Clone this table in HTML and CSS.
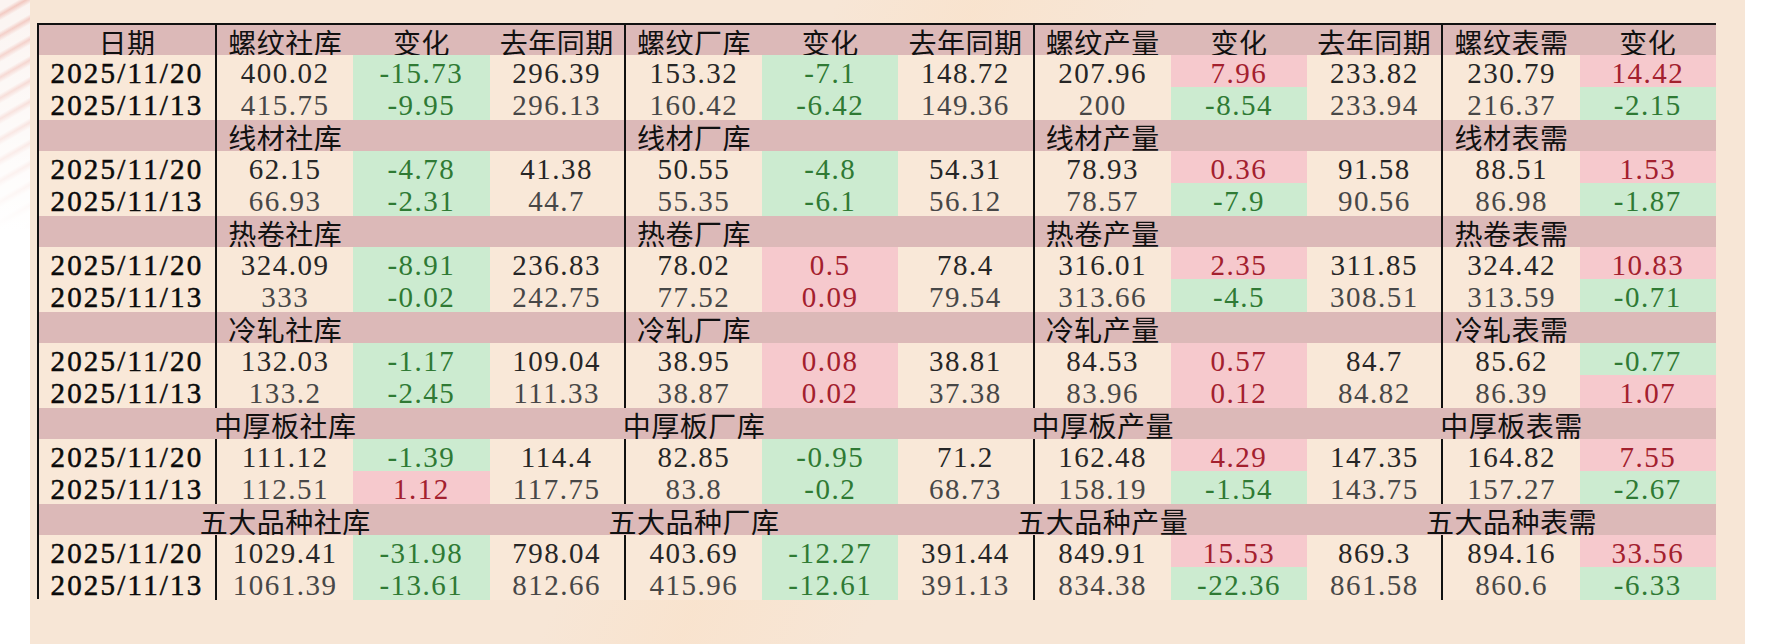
FILE: index.html
```html
<!DOCTYPE html>
<html lang="zh-CN">
<head>
<meta charset="utf-8">
<title>钢材库存表</title>
<link rel="stylesheet" href="styles.css">
</head>
<body>
<div class="page">
  <div class="strip"></div>
  <div class="panel">
    <div class="sheet">
      <div class="row head">
        <div class="cell b">日期</div><div class="cell">螺纹社库</div><div class="cell">变化</div><div class="cell b">去年同期</div>
        <div class="cell">螺纹厂库</div><div class="cell">变化</div><div class="cell b">去年同期</div>
        <div class="cell">螺纹产量</div><div class="cell">变化</div><div class="cell b">去年同期</div>
        <div class="cell">螺纹表需</div><div class="cell">变化</div>
      </div>
      <div class="row data">
        <div class="cell b date">2025/11/20</div><div class="cell">400.02</div><div class="cell g">-15.73</div><div class="cell b">296.39</div>
        <div class="cell">153.32</div><div class="cell g">-7.1</div><div class="cell b">148.72</div>
        <div class="cell">207.96</div><div class="cell r">7.96</div><div class="cell b">233.82</div>
        <div class="cell">230.79</div><div class="cell r">14.42</div>
      </div>
      <div class="row data prev">
        <div class="cell b date">2025/11/13</div><div class="cell">415.75</div><div class="cell g">-9.95</div><div class="cell b">296.13</div>
        <div class="cell">160.42</div><div class="cell g">-6.42</div><div class="cell b">149.36</div>
        <div class="cell">200</div><div class="cell g">-8.54</div><div class="cell b">233.94</div>
        <div class="cell">216.37</div><div class="cell g">-2.15</div>
      </div>

      <div class="row group">
        <div class="cell b"></div><div class="cell">线材社库</div><div class="cell"></div><div class="cell b"></div>
        <div class="cell">线材厂库</div><div class="cell"></div><div class="cell b"></div>
        <div class="cell">线材产量</div><div class="cell"></div><div class="cell b"></div>
        <div class="cell">线材表需</div><div class="cell"></div>
      </div>
      <div class="row data">
        <div class="cell b date">2025/11/20</div><div class="cell">62.15</div><div class="cell g">-4.78</div><div class="cell b">41.38</div>
        <div class="cell">50.55</div><div class="cell g">-4.8</div><div class="cell b">54.31</div>
        <div class="cell">78.93</div><div class="cell r">0.36</div><div class="cell b">91.58</div>
        <div class="cell">88.51</div><div class="cell r">1.53</div>
      </div>
      <div class="row data prev">
        <div class="cell b date">2025/11/13</div><div class="cell">66.93</div><div class="cell g">-2.31</div><div class="cell b">44.7</div>
        <div class="cell">55.35</div><div class="cell g">-6.1</div><div class="cell b">56.12</div>
        <div class="cell">78.57</div><div class="cell g">-7.9</div><div class="cell b">90.56</div>
        <div class="cell">86.98</div><div class="cell g">-1.87</div>
      </div>

      <div class="row group">
        <div class="cell b"></div><div class="cell">热卷社库</div><div class="cell"></div><div class="cell b"></div>
        <div class="cell">热卷厂库</div><div class="cell"></div><div class="cell b"></div>
        <div class="cell">热卷产量</div><div class="cell"></div><div class="cell b"></div>
        <div class="cell">热卷表需</div><div class="cell"></div>
      </div>
      <div class="row data">
        <div class="cell b date">2025/11/20</div><div class="cell">324.09</div><div class="cell g">-8.91</div><div class="cell b">236.83</div>
        <div class="cell">78.02</div><div class="cell r">0.5</div><div class="cell b">78.4</div>
        <div class="cell">316.01</div><div class="cell r">2.35</div><div class="cell b">311.85</div>
        <div class="cell">324.42</div><div class="cell r">10.83</div>
      </div>
      <div class="row data prev">
        <div class="cell b date">2025/11/13</div><div class="cell">333</div><div class="cell g">-0.02</div><div class="cell b">242.75</div>
        <div class="cell">77.52</div><div class="cell r">0.09</div><div class="cell b">79.54</div>
        <div class="cell">313.66</div><div class="cell g">-4.5</div><div class="cell b">308.51</div>
        <div class="cell">313.59</div><div class="cell g">-0.71</div>
      </div>

      <div class="row group">
        <div class="cell b"></div><div class="cell">冷轧社库</div><div class="cell"></div><div class="cell b"></div>
        <div class="cell">冷轧厂库</div><div class="cell"></div><div class="cell b"></div>
        <div class="cell">冷轧产量</div><div class="cell"></div><div class="cell b"></div>
        <div class="cell">冷轧表需</div><div class="cell"></div>
      </div>
      <div class="row data">
        <div class="cell b date">2025/11/20</div><div class="cell">132.03</div><div class="cell g">-1.17</div><div class="cell b">109.04</div>
        <div class="cell">38.95</div><div class="cell r">0.08</div><div class="cell b">38.81</div>
        <div class="cell">84.53</div><div class="cell r">0.57</div><div class="cell b">84.7</div>
        <div class="cell">85.62</div><div class="cell g">-0.77</div>
      </div>
      <div class="row data prev">
        <div class="cell b date">2025/11/13</div><div class="cell">133.2</div><div class="cell g">-2.45</div><div class="cell b">111.33</div>
        <div class="cell">38.87</div><div class="cell r">0.02</div><div class="cell b">37.38</div>
        <div class="cell">83.96</div><div class="cell r">0.12</div><div class="cell b">84.82</div>
        <div class="cell">86.39</div><div class="cell r">1.07</div>
      </div>

      <div class="row group wide">
        <div class="cell"></div><div class="cell">中厚板社库</div><div class="cell"></div><div class="cell"></div>
        <div class="cell">中厚板厂库</div><div class="cell"></div><div class="cell"></div>
        <div class="cell">中厚板产量</div><div class="cell"></div><div class="cell"></div>
        <div class="cell">中厚板表需</div><div class="cell"></div>
      </div>
      <div class="row data">
        <div class="cell b date">2025/11/20</div><div class="cell">111.12</div><div class="cell g">-1.39</div><div class="cell b">114.4</div>
        <div class="cell">82.85</div><div class="cell g">-0.95</div><div class="cell b">71.2</div>
        <div class="cell">162.48</div><div class="cell r">4.29</div><div class="cell b">147.35</div>
        <div class="cell">164.82</div><div class="cell r">7.55</div>
      </div>
      <div class="row data prev">
        <div class="cell b date">2025/11/13</div><div class="cell">112.51</div><div class="cell r">1.12</div><div class="cell b">117.75</div>
        <div class="cell">83.8</div><div class="cell g">-0.2</div><div class="cell b">68.73</div>
        <div class="cell">158.19</div><div class="cell g">-1.54</div><div class="cell b">143.75</div>
        <div class="cell">157.27</div><div class="cell g">-2.67</div>
      </div>

      <div class="row group wide">
        <div class="cell"></div><div class="cell">五大品种社库</div><div class="cell"></div><div class="cell"></div>
        <div class="cell">五大品种厂库</div><div class="cell"></div><div class="cell"></div>
        <div class="cell">五大品种产量</div><div class="cell"></div><div class="cell"></div>
        <div class="cell">五大品种表需</div><div class="cell"></div>
      </div>
      <div class="row data">
        <div class="cell b date">2025/11/20</div><div class="cell">1029.41</div><div class="cell g">-31.98</div><div class="cell b">798.04</div>
        <div class="cell">403.69</div><div class="cell g">-12.27</div><div class="cell b">391.44</div>
        <div class="cell">849.91</div><div class="cell r">15.53</div><div class="cell b">869.3</div>
        <div class="cell">894.16</div><div class="cell r">33.56</div>
      </div>
      <div class="row data prev last">
        <div class="cell b date">2025/11/13</div><div class="cell">1061.39</div><div class="cell g">-13.61</div><div class="cell b">812.66</div>
        <div class="cell">415.96</div><div class="cell g">-12.61</div><div class="cell b">391.13</div>
        <div class="cell">834.38</div><div class="cell g">-22.36</div><div class="cell b">861.58</div>
        <div class="cell">860.6</div><div class="cell g">-6.33</div>
      </div>
    </div>
  </div>
</div>
</body>
</html>
```

FILE: styles.css
```css
html, body {
  margin: 0;
  padding: 0;
  background: #ffffff;
}

.page {
  width: 1782px;
  height: 644px;
  display: flex;
  overflow: hidden;
}

.strip {
  width: 30px;
  height: 644px;
  flex: none;
  background:
    linear-gradient(180deg, rgba(255,255,255,0) 0px, rgba(255,255,255,1) 230px),
    repeating-linear-gradient(150deg, #fbf4f1 0px, #fbf4f1 9px, #f2c8c0 13px, #fbf4f1 18px);
}

.panel {
  width: 1715px;
  height: 644px;
  flex: none;
  box-sizing: border-box;
  padding-top: 23px;
  background:
    linear-gradient(115deg, rgba(255,255,255,0) 40%, rgba(250,225,200,0.55) 47%, rgba(255,255,255,0) 56%),
    #f7e6d6;
}

.sheet {
  margin-left: 7px;
  width: 1679px;
  border-top: 2px solid #111;
  border-bottom: 2px solid #111;
  border-left: 2px solid #111;
  box-sizing: border-box;
  font-family: "Liberation Serif", "Noto Sans CJK SC", serif;
  font-size: 29px;
  letter-spacing: 1.5px;
}

.row {
  display: grid;
  grid-template-columns: 178px repeat(11, 136.27px);
  height: 32px;
}

.row.head {
  height: 30px;
  background: #dcb9b8;
}

.row.last {
  height: 30px;
}

.row.group {
  background: #dcb9b8;
}

.cell {
  display: flex;
  align-items: center;
  justify-content: center;
  white-space: nowrap;
  box-sizing: border-box;
  min-width: 0;
  line-height: 1;
}

.cell.b {
  border-right: 2px solid #111;
}

.head .cell,
.group .cell {
  color: #111;
  font-family: "Noto Sans CJK SC", sans-serif;
  font-size: 28px;
  letter-spacing: 0.5px;
  padding-top: 3px;
}

.wide .cell {
  border-right: none;
}

.data .cell {
  background: #f9e8d8;
  color: #262626;
  padding-top: 4px;
}

.data.prev .cell {
  color: #474747;
}

.data .cell.date {
  color: #0a0a0a;
  letter-spacing: 2.2px;
  -webkit-text-stroke: 0.5px #0a0a0a;
}

.data .cell.g {
  background: #ccebd0;
  color: #2f7a34;
}

.data .cell.r {
  background: #f6c9cd;
  color: #a3202e;
}
```
